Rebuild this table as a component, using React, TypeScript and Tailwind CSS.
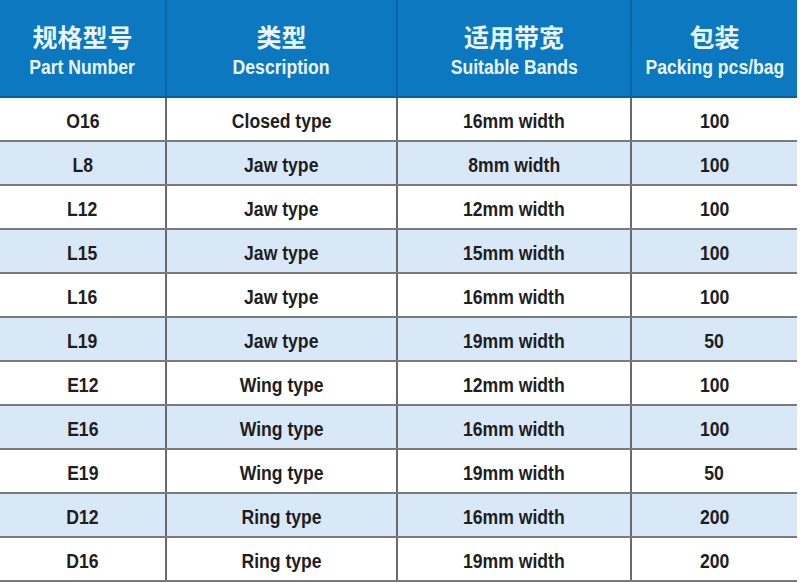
import React from "react";

const rows: [string, string, string, string][] = [
  ["O16", "Closed type", "16mm width", "100"],
  ["L8", "Jaw type", "8mm width", "100"],
  ["L12", "Jaw type", "12mm width", "100"],
  ["L15", "Jaw type", "15mm width", "100"],
  ["L16", "Jaw type", "16mm width", "100"],
  ["L19", "Jaw type", "19mm width", "50"],
  ["E12", "Wing type", "12mm width", "100"],
  ["E16", "Wing type", "16mm width", "100"],
  ["E19", "Wing type", "19mm width", "50"],
  ["D12", "Ring type", "16mm width", "200"],
  ["D16", "Ring type", "19mm width", "200"],
];

const heads: [string, string][] = [
  ["规格型号", "Part Number"],
  ["类型", "Description"],
  ["适用带宽", "Suitable Bands"],
  ["包装", "Packing pcs/bag"],
];

const font = {
  fontFamily: '"Liberation Sans", Arial, "Noto Sans CJK SC", sans-serif',
};

export default function App() {
  return (
    <div className="w-[800px] h-[583px] bg-white overflow-hidden" style={font}>
      <div className="w-[797px]">
        <div className="grid grid-cols-[167px_231px_234px_165px] h-[98px] bg-[#0b78c0] border-b-2 border-[#0a5f98]">
          {heads.map(([zh, en], i) => (
            <div
              key={i}
              className={`flex flex-col items-center justify-center text-[#eaf5fd] font-bold ${
                i < 3 ? "border-r-2 border-[#0a66a6]" : ""
              }`}
            >
              <div className="text-[25px] leading-[28px] mt-[6px]">{zh}</div>
              <div className="text-[20px] leading-[24px] mt-[3px] inline-block scale-x-[0.88] whitespace-nowrap">
                {en}
              </div>
            </div>
          ))}
        </div>
        {rows.map((r, ri) => (
          <div
            key={ri}
            className={`grid grid-cols-[167px_231px_234px_165px] h-[44px] border-b-2 border-[#7a7a7a] ${
              ri % 2 === 1 ? "bg-[#d8e8f6]" : "bg-white"
            }`}
          >
            {r.map((c, ci) => (
              <div
                key={ci}
                className={`flex items-center justify-center pt-[3px] text-[#1e1e1e] ${
                  ci < 3 ? "border-r-2 border-[#6a6a6a]" : ""
                }`}
              >
                <span className="inline-block text-[20px] font-bold scale-x-[0.88] whitespace-nowrap">{c}</span>
              </div>
            ))}
          </div>
        ))}
      </div>
    </div>
  );
}
